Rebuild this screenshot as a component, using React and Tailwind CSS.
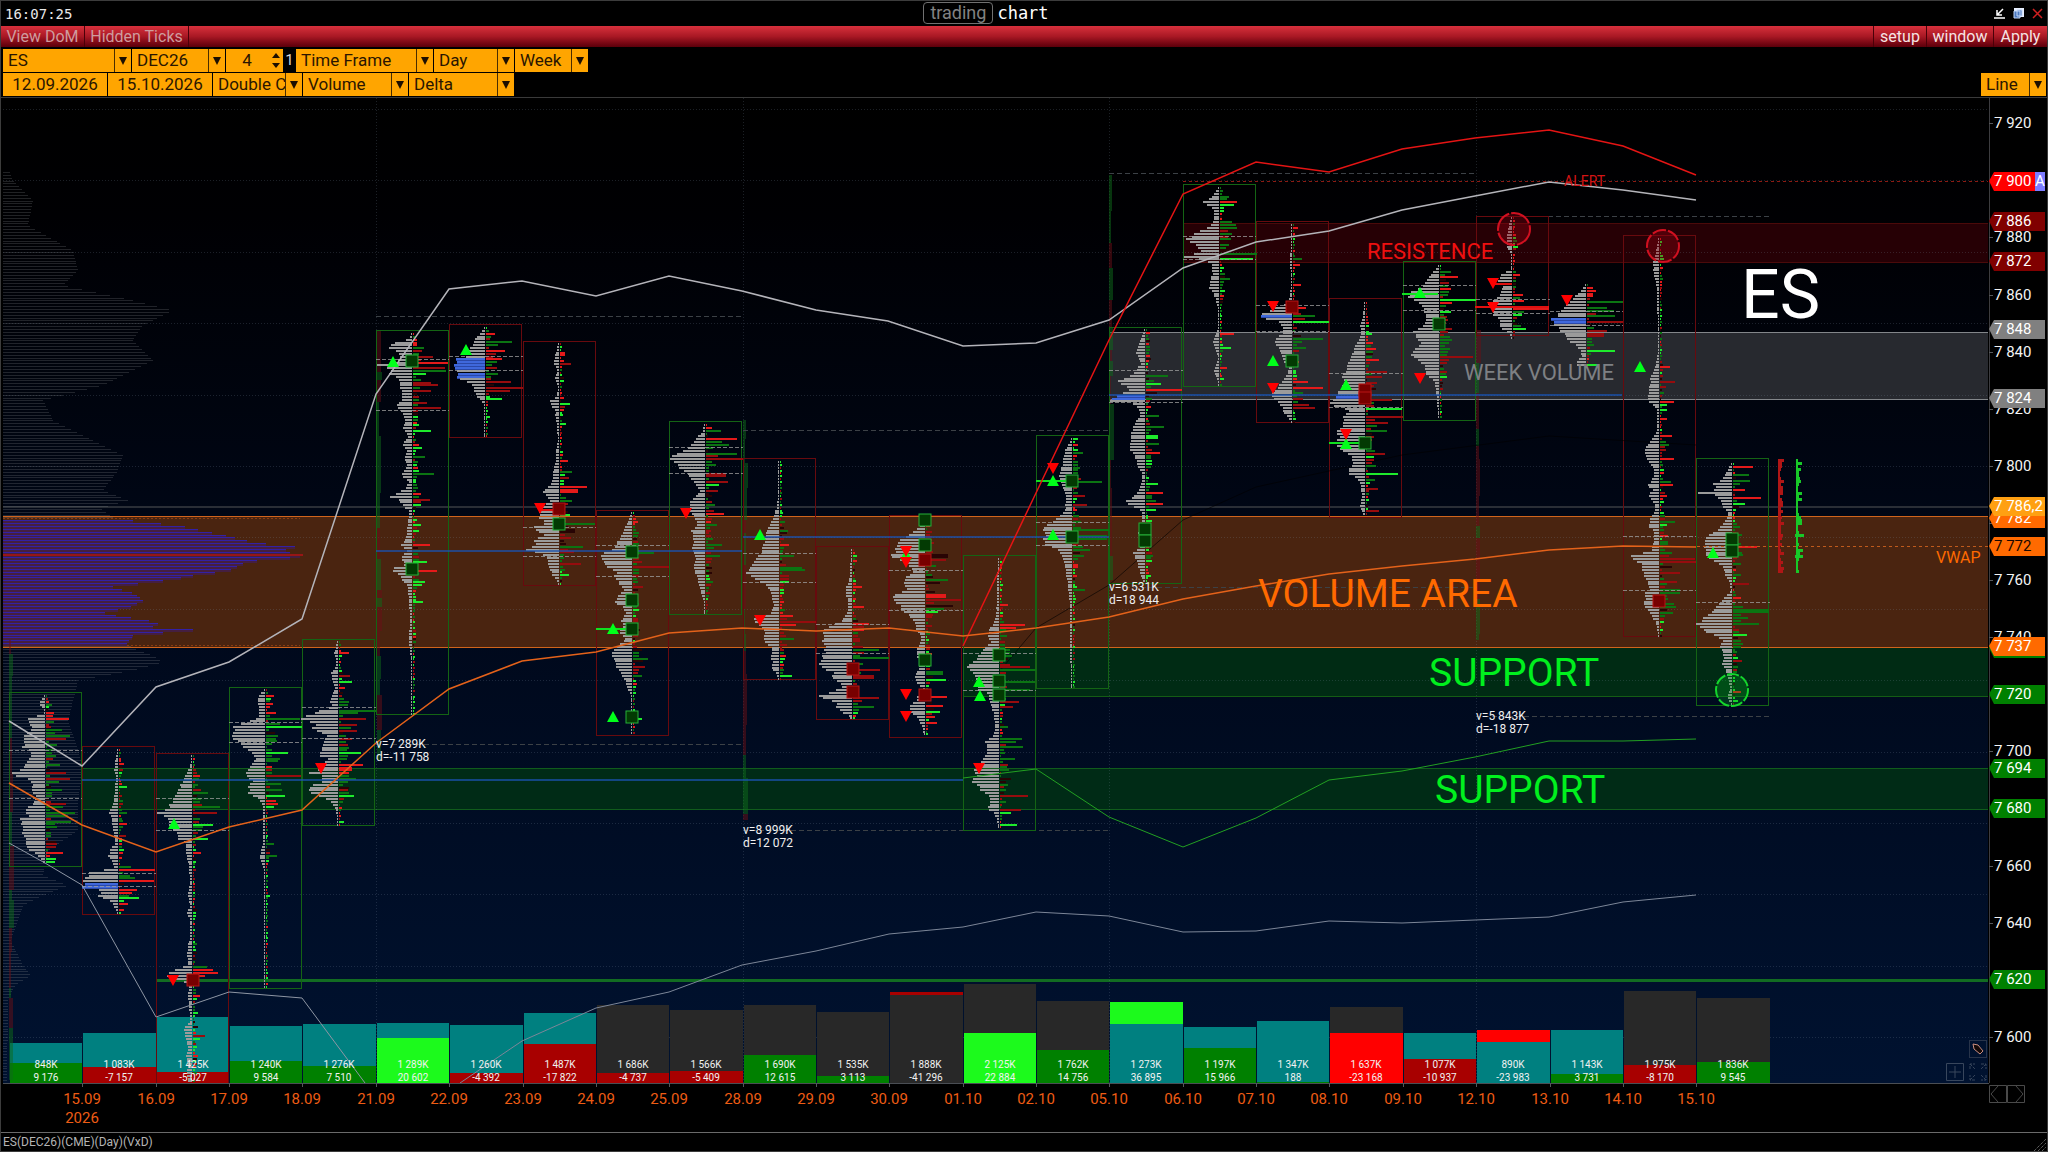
const STEP = 73.36;
const LEFT = 9;
const BASE = 1083;
const ROW = 2.855;

const sx = (k) => Math.round(LEFT + k * STEP);
const py = (price) => Math.round(123.2 + (7920 - price) * ROW);

// box: [top, bottom, colour], va: value area lines, vol: y:width, delta: y:width+tone
const sessions = [
  {
    date: "14.09", k: "848K", d: "9 176", bar: [1043, "t"], db: [1063, 1083, "g"], box: [692, 866, "g"], va: [750, 798],
    vol: "695:1 703:7 707:1 713:1 717:17 724:15 728:12 733:21 738:23 747:22 751:13 755:14 763:20 769:26 772:36 776:26 778:17 784:13 790:14 795:9 802:12 810:21 815:17 818:24 825:24 833:23 840:19 847:20 853:8 863:1",
    delta: "703:6g 713:8R 716:7R 719:23R 729:16g 735:24g 738:20r 743:11g 756:10g 764:14g 771:20r 778:24r 781:13g 789:16g 804:20r 807:17g 811:29g 815:22g 820:25g 844:11r 852:17R 858:10G 861:9G",
  },
  {
    date: "15.09", k: "1 083K", d: "-7 157", bar: [1033, "t"], db: [1067, 1083, "r"], box: [746, 914, "r"], va: [873, 886], hot: [[882, 887]],
    vol: "749:1 770:4 775:2 800:4 812:9 816:7 822:6 835:4 843:3 849:8 855:10 859:6 866:4 869:14 872:29 876:33 886:36 888:22 892:18 895:20 898:12 902:5 913:1",
    delta: "764:5R 786:8G 812:8g 823:8R 836:7r 867:12g 869:36R 877:16g 880:35R 888:18R 893:13R 898:20G 904:9R 908:5R",
  },
  {
    date: "16.09", k: "1 425K", d: "-5 027", bar: [1017, "t"], db: [1072, 1083, "r"], box: [753, 1100, "r"], va: [798, 830],
    vol: "755:1 765:2 775:7 785:12 795:17 802:20 808:26 812:34 818:26 822:25 826:22 830:19 834:13 838:15 842:6 855:6 865:3 880:2 895:4 905:2 912:5 918:2 935:2 950:5 963:4 966:9 970:22 973:26 976:24 980:10 984:3 995:4 1003:3 1020:2 1028:8 1038:7 1045:4 1057:6 1063:4 1070:5 1082:4",
    delta: "774:7R 792:15g 807:27g 811:24r 824:20G 838:15G 852:8R 967:14g 969:20R 973:25R 976:12R 995:7R 1012:5G 1035:12r 1038:7G",
  },
  {
    date: "17.09", k: "1 240K", d: "9 584", bar: [1026, "t"], db: [1061, 1083, "g"], box: [687, 988, "g"], va: [722, 742],
    vol: "689:1 694:6 705:7 714:5 718:9 721:19 727:35 731:30 735:34 740:30 745:22 750:17 757:9 764:13 770:19 776:20 780:12 785:16 793:17 797:8 803:3 810:2 840:2 857:5 865:3 870:1 988:1",
    delta: "696:8R 704:7R 711:10R 718:34g 722:14g 727:36G 735:12g 738:10g 752:22G 758:14g 760:12g 767:6R 775:35r 782:15g 790:16g 795:19G 800:10R 803:12R 807:8G 844:8g 855:11g 895:4G",
  },
  {
    date: "18.09", k: "1 276K", d: "7 510", bar: [1024, "t"], db: [1066, 1083, "g"], box: [639, 825, "g"], va: [707, 738],
    vol: "641:1 653:4 658:2 665:2 672:7 680:6 687:3 700:8 706:6 710:20 713:28 718:36 723:24 728:27 734:12 742:14 750:18 754:20 758:10 764:18 768:19 772:29 776:14 781:18 786:31 791:31 795:20 800:8 807:3 815:1 824:1",
    delta: "652:10R 675:11r 681:13G 687:6R 700:10g 704:9g 710:37g 713:19g 718:27r 724:18r 729:18r 739:13r 752:22G 758:8g 764:24R 768:13R 772:10R 778:17g 795:15G 821:5G",
  },
  {
    date: "21.09", k: "1 289K", d: "20 602", bar: [1023, "t"], db: [1038, 1083, "G"], box: [330, 714, "g"], va: [359, 410],
    vol: "333:1 338:2 343:20 347:23 352:14 357:12 362:20 364:36 368:20 372:24 378:14 385:12 393:10 400:11 405:15 412:10 420:7 427:9 435:4 443:9 450:5 458:7 464:5 470:8 474:12 480:3 487:7 492:14 495:24 500:12 505:9 510:3 530:5 540:7 544:12 550:5 558:12 563:6 569:23 574:14 580:9 586:4 600:3 620:2 640:3 660:1 713:1",
    delta: "343:4R 355:20r 361:35R 367:32r 370:33g 373:13G 381:18r 385:25r 389:18r 402:14r 407:28r 424:6G 430:18G 444:6R 447:9G 456:12g 466:5R 472:21g 492:8R 494:8R 498:17r 505:8G 523:8G 530:6G 544:17R 549:7g 561:14G 570:24R 581:12G 584:9G 601:10G",
  },
  {
    date: "22.09", k: "1 260K", d: "-4 392", bar: [1025, "t"], db: [1073, 1083, "r"], box: [324, 437, "r"], va: [356, 370], hot: [[357, 368], [372, 377]],
    vol: "327:1 333:5 338:11 343:11 347:16 350:18 356:20 358:31 365:30 372:28 375:34 378:24 382:16 388:11 395:9 400:3 405:1 436:1",
    delta: "333:9R 342:26g 344:12g 350:19R 358:16R 381:25r 387:37r 390:24r 396:4G 398:16G 416:4G",
  },
  {
    date: "23.09", k: "1 487K", d: "-17 822", bar: [1013, "t"], db: [1044, 1083, "r"], box: [341, 585, "r"], va: [527, 556],
    vol: "343:1 353:3 358:5 362:5 370:2 378:4 385:1 395:2 400:9 405:8 410:3 415:4 425:2 440:1 450:3 460:3 470:6 478:6 484:9 490:16 495:13 500:10 505:16 510:20 517:22 522:12 526:25 530:24 533:14 540:26 543:22 546:30 550:33 552:20 555:14 562:12 567:10 575:6 580:2 584:1",
    delta: "353:5R 364:11r 379:4G 398:4R 404:10G 409:4R 424:6G 459:8R 472:12g 478:9r 487:27R 490:18R 500:12g 513:10G 524:35g 530:15k 547:23g 552:14r 563:21r 575:9G",
  },
  {
    date: "24.09", k: "1 686K", d: "-4 737", bar: [1005, "n"], db: [1073, 1083, "r"], box: [510, 735, "r"], va: [545, 576],
    vol: "512:1 520:4 530:8 540:14 547:18 550:22 554:34 560:28 564:30 568:22 572:16 575:20 580:15 586:11 590:8 594:14 598:15 602:19 606:10 612:6 620:12 625:9 630:14 634:11 637:6 642:10 648:18 654:20 660:18 666:16 672:11 680:7 685:6 690:3 696:1 733:1",
    delta: "521:5R 553:21g 567:36r 586:10r 652:6g 658:15g 667:12r 676:9g 687:3G 692:3G 717:9G",
  },
  {
    date: "25.09", k: "1 566K", d: "-5 409", bar: [1010, "n"], db: [1071, 1083, "r"], box: [421, 614, "g"], va: [447, 473],
    vol: "424:1 432:3 438:10 444:14 448:20 452:27 455:35 459:34 462:30 467:27 473:18 478:14 484:9 490:5 495:9 500:14 505:17 510:16 515:12 520:9 525:8 530:14 537:12 542:12 548:13 553:11 560:10 568:11 575:9 585:6 593:4 600:1 613:1",
    delta: "427:6R 430:15g 438:31R 442:16g 444:23g 453:31g 458:37r 474:20r 481:22r 484:13G 490:12r 512:18R 524:11g 544:16g 556:14g 580:7g",
  },
  {
    date: "28.09", k: "1 690K", d: "12 615", bar: [1005, "n"], db: [1055, 1083, "g"], box: [458, 679, "r"], va: [553, 582],
    vol: "461:1 495:1 505:2 515:5 520:7 525:10 533:13 540:15 547:17 552:18 558:23 562:26 566:31 570:34 573:33 576:27 580:21 584:14 590:8 598:7 605:5 612:9 617:22 619:30 622:22 626:20 630:14 635:15 640:16 645:9 650:6 656:9 662:6 667:8 672:3 678:1",
    delta: "522:5g 530:8g 544:9R 554:14g 567:22g 570:25g 581:9G 589:4G 615:13R 620:36r 623:16R 638:14g 676:12G",
  },
  {
    date: "29.09", k: "1 535K", d: "3 113", bar: [1012, "n"], db: [1076, 1083, "g"], box: [546, 719, "r"], va: [624, 653],
    vol: "549:1 575:2 583:4 588:7 593:6 600:4 610:4 617:8 620:10 623:18 626:25 630:30 636:29 645:29 652:28 658:32 662:31 665:33 668:28 672:20 678:19 683:12 687:10 691:22 695:34 698:25 702:16 707:15 712:9 716:2 718:1",
    delta: "555:4G 561:4R 587:9R 606:11R 624:16R 628:11R 649:26g 658:36g 670:27r 676:21r 698:26r 706:21g 712:5G",
  },
  {
    date: "30.09", k: "1 888K", d: "-41 296", bar: [995, "n"], db: [992, 995, "r"], box: [515, 737, "r"], va: [570, 610],
    vol: "525:5 530:10 534:16 538:24 543:31 548:30 555:34 558:28 563:20 567:14 572:12 577:20 583:24 588:20 593:28 595:35 600:31 605:24 609:26 613:18 620:11 628:9 635:4 642:5 650:9 655:8 662:4 668:7 675:11 682:9 688:2 695:7 700:9 705:16 711:14 716:8 720:6 724:3 736:1",
    delta: "521:16R 555:22k 560:20r 578:22g 582:14k 595:20R 600:35r 605:27k 607:18g 610:12G 672:17g 680:20G 695:21R 706:17R 711:14G 716:9R 723:11R",
  },
  {
    date: "01.10", k: "2 125K", d: "22 884", bar: [984, "n"], db: [1033, 1083, "G"], box: [555, 830, "g"], va: [653, 690],
    vol: "558:1 580:2 600:2 615:3 622:5 628:10 635:11 641:9 648:15 654:20 660:26 665:35 668:32 673:27 678:23 684:20 688:26 692:12 700:10 707:7 715:5 722:4 730:4 735:7 741:14 748:11 755:14 760:18 765:22 770:26 775:22 780:28 785:22 790:17 795:10 802:9 807:12 812:6 817:2 827:1",
    delta: "584:3G 604:8R 623:25R 627:16R 666:30r 669:36g 680:35g 689:30g 701:19r 706:13r 727:8g 738:22g 741:16g 746:23g 757:15g 795:28r 808:21r 812:11G 823:17G",
  },
  {
    date: "02.10", k: "1 762K", d: "14 756", bar: [1001, "n"], db: [1050, 1083, "g"], box: [435, 688, "g"], va: [522, 545],
    vol: "438:1 444:4 450:7 458:9 463:10 470:12 476:14 482:11 488:9 495:6 503:7 508:6 515:12 520:18 525:26 530:29 536:28 542:29 545:24 548:16 553:11 560:8 567:7 575:6 585:4 595:3 610:2 640:2 687:1",
    delta: "439:5G 443:5R 452:10g 481:29g 495:12r 504:14r 529:36g 535:34g 538:34g 550:17g 555:11g 589:12g",
  },
  {
    date: "05.10", k: "1 273K", d: "36 895", bar: [1024, "t"], db: [1002, 1024, "G"], box: [327, 583, "g"], va: [370, 402], hot: [[394, 399]],
    vol: "329:1 340:5 350:9 356:7 362:4 370:9 375:16 381:29 385:18 389:18 393:26 396:30 400:35 403:12 408:6 415:5 422:10 428:12 435:15 442:14 450:16 455:10 465:8 472:3 480:3 488:6 495:11 501:22 505:12 510:4 520:3 532:7 545:4 552:12 560:8 568:6 575:4 582:1",
    delta: "333:4R 376:22g 384:15G 390:36R 415:13g 426:18g 436:12G 444:13g 453:14R 484:12G 492:17R 502:17R 510:10G 520:6G 575:5G",
  },
  {
    date: "06.10", k: "1 197K", d: "15 966", bar: [1027, "t"], db: [1048, 1083, "g"], box: [184, 386, "g"], va: [236, 259],
    vol: "187:1 193:5 198:10 202:20 205:8 212:5 220:5 225:10 230:19 234:27 238:33 241:28 245:24 250:18 254:26 256:35 259:14 264:8 272:6 280:9 287:10 293:5 300:3 306:1 325:1 332:3 340:6 348:4 355:1 365:3 370:5 377:2 385:1",
    delta: "196:9g 201:17R 204:14G 222:12g 225:16g 228:17g 253:37g 258:33G 278:10g 333:14R 347:11G 367:7R 378:4G",
  },
  {
    date: "07.10", k: "1 347K", d: "188", bar: [1021, "t"], db: [1082, 1083, "g"], box: [221, 422, "r"], va: [305, 331], hot: [[314, 316]],
    vol: "224:1 240:1 260:2 280:1 295:2 303:5 308:20 312:28 315:33 318:25 321:14 327:9 332:9 337:16 342:17 350:12 360:9 367:3 374:5 380:10 386:14 393:20 398:19 403:12 410:9 415:5 421:1",
    delta: "228:5R 258:9g 264:7R 284:8R 307:13R 316:22g 321:36G 339:30g 348:13g 380:15R 382:18R 387:30R 403:16r 407:22r 417:3G",
  },
  {
    date: "08.10", k: "1 637K", d: "-23 168", bar: [1007, "n"], db: [1033, 1083, "R"], box: [298, 517, "r"], va: [373, 407], hot: [[394, 396]],
    vol: "302:1 315:2 325:5 332:4 340:7 345:11 352:12 360:17 368:18 376:23 382:20 388:24 393:28 398:30 403:35 406:34 409:14 415:22 423:22 430:28 437:26 443:32 448:26 452:18 457:12 463:13 469:16 472:18 477:8 483:5 495:3 505:5 514:2",
    delta: "333:6G 341:7R 349:10R 358:13R 370:21r 377:16r 399:26r 407:36G 415:37r 423:22r 430:21g 453:19r 456:8G 464:10g 473:32G 478:9g 483:4G 487:12r 510:13r",
  },
  {
    date: "09.10", k: "1 077K", d: "-10 937", bar: [1033, "t"], db: [1059, 1083, "r"], box: [261, 420, "g"], va: [285, 310],
    vol: "265:1 272:7 280:14 286:17 293:33 298:28 303:18 310:14 318:14 325:17 332:28 336:22 342:18 350:26 354:30 360:20 366:14 374:13 380:5 388:3 400:2 419:1",
    delta: "270:11g 276:18R 287:11R 299:36G 303:12R 310:11G 327:12r 341:9g 356:33r 376:7G",
  },
  {
    date: "12.10", k: "890K", d: "-23 983", bar: [1042, "t"], db: [1030, 1042, "R"], box: [216, 335, "r"], va: [299, 313],
    vol: "217:1 225:3 235:5 247:5 252:1 268:1 273:10 280:15 284:9 292:11 298:17 303:26 308:20 313:20 318:13 326:13 332:3 337:1",
    delta: "246:5G 274:7R 294:10R 299:11R 307:36R 313:9G 327:13G",
  },
  {
    date: "13.10", k: "1 143K", d: "3 731", bar: [1030, "t"], db: [1074, 1083, "g"], box: null, va: [311, 325], hot: [[317, 321]],
    vol: "284:1 290:5 296:12 302:18 308:22 313:28 318:34 323:32 328:26 333:23 340:18 345:9 350:6 355:4 360:9 363:12 366:4",
    delta: "287:6R 290:9R 294:6R 302:36g 307:20g 311:27g 316:28g 322:36r 330:20r 334:17r 350:28G 365:10G",
  },
  {
    date: "14.10", k: "1 975K", d: "-8 170", bar: [991, "n"], db: [1065, 1083, "r"], box: [235, 636, "r"], va: [536, 590],
    vol: "238:1 255:4 262:6 270:6 278:4 288:2 350:1 363:3 370:6 380:9 392:10 400:12 404:6 408:2 430:2 437:6 445:12 452:15 460:11 468:5 475:5 485:12 489:6 495:11 502:5 508:3 514:7 520:9 526:10 530:5 540:5 550:8 556:35 559:25 563:18 570:17 576:14 583:11 588:8 592:14 598:13 604:16 608:12 614:8 622:3 635:1",
    delta: "366:10R 381:15r 402:14R 404:7G 410:7G 418:7R 435:12R 443:9g 457:14R 459:12g 481:11g 484:13R 494:7R 520:15g 524:7G 534:8R 542:8g 552:12g 558:35r 561:36r 567:12k 573:20r 581:17r 588:20g 591:20g 603:14g 607:16g 613:13g 620:4G 630:3G",
  },
  {
    date: "15.10", k: "1 836K", d: "9 545", bar: [998, "n"], db: [1062, 1083, "g"], box: [458, 705, "g"], va: [602],
    vol: "463:1 470:5 478:10 483:18 488:14 492:34 494:18 499:11 505:9 512:4 518:5 525:12 530:16 535:24 540:27 545:30 550:28 555:25 560:18 566:9 575:6 583:2 590:1 596:7 603:13 608:17 614:26 619:31 623:35 627:34 631:27 634:18 640:10 645:13 650:10 656:8 664:10 670:6 680:3 690:2 695:5 704:1",
    delta: "466:20R 475:16g 481:17g 490:12R 496:28R 504:12G 547:24R 575:8g 582:16r 596:8R 610:36g 617:15g 622:26g 633:14G 639:8g 643:10g 661:9r 692:8R 701:5G",
  },
];

const tones = { r: "#960c0e", R: "#e41a1a", g: "#0b7412", G: "#1eea2c", k: "#280404" };
const barFill = { t: "#008080", n: "#282828", g: "#008000", G: "#1cfa1c", r: "#a80000", R: "#ff0000" };
const boxStroke = { g: "#146414", r: "#680a0e" };

const histogram =
  "165:4 180:10 200:30 225:25 250:70 270:75 285:60 300:130 310:170 325:140 340:130 360:150 385:100 400:40 420:50 440:90 455:120 470:115 490:100 500:125 508:98 517:110 520:130 525:177 535:223 542:253 546:292 550:280 556:300 559:260 562:242 570:226 575:190 580:160 586:110 593:132 600:140 606:128 613:98 618:135 622:157 626:150 629:190 632:160 635:130 643:124 648:130 655:150 662:160 670:130 680:75 700:70 720:65 750:75 770:80 800:75 830:75 850:45 875:40 885:65 895:40 905:20 940:8 965:20 975:28 985:12 1000:5 1080:4";

const upperBand = "9,721 82,766 156,687 229,662 302,619 376,394 449,289 522,281 596,296 669,276 742,291 816,310 888,321 963,346 1036,343 1109,320 1183,268 1256,242 1329,231 1402,210 1475,196 1549,182 1623,190 1696,200";
const vwap = "9,783 82,825 156,852 229,827 302,810 376,743 449,689 522,661 596,652 669,633 742,628 816,631 889,628 963,636 1036,628 1109,617 1183,599 1256,586 1329,574 1402,566 1475,559 1549,550 1623,546 1696,547";
const redBand = "963,646 1036,493 1109,340 1183,194 1256,162 1329,172 1402,149 1475,138 1549,130 1623,146 1696,175";
const greenBand = "963,778 1036,769 1109,817 1183,847 1256,818 1329,780 1402,771 1475,757 1549,741 1623,741 1696,739";
const lowerBandA = "9,843 45,863 82,885 156,1017 229,992 302,998 365,1083";
const lowerBandB = "460,1083 522,1041 596,1008 669,992 742,965 816,951 889,934 963,927 1036,912 1109,916 1183,932 1256,931 1329,921 1402,923 1475,920 1549,917 1623,902 1696,895";
const darkLine = "982,692 1036,628 1109,585 1183,520 1256,487 1402,455 1549,436 1696,445";

const weeks = [
  { from: 5, to: 10, top: 316, bottom: 744, v: "v=7 289K", d: "d=-11 758" },
  { from: 10, to: 15, top: 430, bottom: 830, v: "v=8 999K", d: "d=12 072" },
  { from: 15, to: 20, top: 173, bottom: 587, v: "v=6 531K", d: "d=18 944" },
  { from: 20, to: 24, top: 216, bottom: 716, v: "v=5 843K", d: "d=-18 877" },
];

const pocLines = [
  [82, 963, 780],
  [376, 742, 551],
  [743, 1109, 537],
  [1109, 1622, 395],
];

const upMarks = [[174, 824], [393, 362], [466, 350], [613, 629], [613, 717], [760, 535], [906, 555], [979, 682], [980, 696], [1053, 481], [1053, 535], [1273, 361], [1346, 385], [1346, 444], [1420, 293], [1640, 367], [1713, 553]];
const downMarks = [[173, 980], [321, 768], [540, 508], [686, 513], [760, 620], [906, 551], [906, 562], [906, 694], [906, 716], [979, 768], [1053, 468], [1273, 306], [1273, 388], [1346, 434], [1420, 378], [1493, 283], [1493, 307], [1567, 300]];
const squares = [
  [193, 980, "r"], [412, 361, "g"], [412, 569, "g"], [559, 509, "r"], [559, 524, "g"],
  [632, 552, "g"], [632, 600, "g"], [632, 629, "g"], [632, 717, "g"],
  [853, 669, "r"], [853, 692, "r"],
  [925, 520, "g"], [925, 560, "r"], [925, 545, "g"], [925, 660, "g"], [925, 695, "r"],
  [999, 655, "g"], [999, 681, "g"], [999, 695, "g"],
  [1072, 481, "g"], [1072, 537, "g"], [1145, 529, "g"], [1145, 541, "g"],
  [1292, 307, "r"], [1292, 361, "g"], [1365, 390, "r"], [1365, 398, "r"], [1365, 443, "g"],
  [1439, 324, "g"], [1659, 601, "r"], [1732, 539, "g"], [1732, 551, "g"],
];

const ticks = [7920, 7880, 7860, 7840, 7820, 7800, 7780, 7760, 7740, 7700, 7660, 7640, 7600];
const tags = [
  { y: 181, text: "7 900", fill: "#ff0000", alert: true },
  { y: 221, text: "7 886", fill: "#800000" },
  { y: 261, text: "7 872", fill: "#800000" },
  { y: 329, text: "7 848", fill: "#808080" },
  { y: 398, text: "7 824", fill: "#808080" },
  { y: 518, text: "7 782", fill: "#ff6a00" },
  { y: 506, text: "7 786,2", fill: "#ffa012" },
  { y: 546, text: "7 772", fill: "#ff6a00", color: "#1a0800" },
  { y: 648, text: "", fill: "#008000" },
  { y: 646, text: "7 737", fill: "#ff6a00" },
  { y: 694, text: "7 720", fill: "#008000" },
  { y: 768, text: "7 694", fill: "#008000" },
  { y: 808, text: "7 680", fill: "#008000" },
  { y: 979, text: "7 620", fill: "#008000" },
];

function parse(str) {
  return str.split(" ").map((s) => {
    const [y, w] = s.split(":");
    return [Number(y), parseInt(w, 10), w.slice(-1)];
  });
}

function widthAt(points, y) {
  for (let i = 1; i < points.length; i++) {
    const [y0, w0] = points[i - 1];
    const [y1, w1] = points[i];
    if (y <= y1) return w0 + ((w1 - w0) * (y - y0)) / (y1 - y0);
  }
  return points[points.length - 1][1];
}

function random(seed) {
  let s = seed * 7919 + 17;
  return () => {
    s = (s * 1103515245 + 12345) % 2147483648;
    return s / 2147483648;
  };
}

function Profile({ session, index }) {
  const rnd = random(index + 3);
  const points = parse(session.vol);
  const deltas = parse(session.delta);
  const cx = sx(index) + 36;
  const first = points[0][0];
  const last = points[points.length - 1][0];
  const rows = [];
  for (let i = 0; first + i * ROW <= last; i++) {
    const y = Math.round(first + i * ROW);
    const w = Math.max(1, Math.round(widthAt(points, y) * (0.9 + rnd() * 0.14)));
    const hit = deltas.find((d) => Math.abs(d[0] - y) <= 1.4);
    const blue = (session.hot || []).some(([a, b]) => y >= a && y <= b);
    const up = rnd() < (session.box && session.box[2] === "g" ? 0.62 : 0.42);
    const bright = w < 9 && rnd() < 0.5;
    let dw = hit ? hit[1] : Math.round(1 + rnd() * Math.min(11, 1 + w * 0.5));
    let tone = up ? (bright ? "G" : "g") : bright ? "R" : rnd() < 0.3 ? "k" : "r";
    if (hit) tone = hit[2];
    if (w <= 2 && !hit) dw = i % 2 ? 2 : 1;
    rows.push({ y, w, dw, fill: tones[tone], blue });
  }
  return (
    <g shapeRendering="crispEdges">
      {rows.map((r) => (
        <g key={r.y}>
          {r.blue && <rect x={cx - r.w} y={r.y} width={r.w} height={3} fill="#2a48a8" />}
          <rect x={cx - r.w} y={r.y} width={r.w} height={2} fill={r.blue ? "#3f68dc" : "#9b9b9b"} />
          <rect x={cx + 1} y={r.y} width={r.dw} height={2} fill={r.fill} />
        </g>
      ))}
      {session.va.map((y) => (
        <path key={y} d={`M${sx(index)} ${y}.5H${sx(index + 1)}`} stroke="#a0a0a0" strokeDasharray="4 2" strokeOpacity="0.75" />
      ))}
    </g>
  );
}

function Histogram() {
  const points = parse(histogram);
  const rows = [];
  for (let i = 0; 172 + i * ROW < 1080; i++) {
    const y = Math.round(172 + i * ROW);
    const w = Math.round(widthAt(points, y));
    rows.push({ y, w, inside: y > 517 && y < 645 });
  }
  return (
    <g shapeRendering="crispEdges">
      {rows.map(({ y, w, inside }) =>
        inside ? (
          <g key={y}>
            <rect x={3} y={y} width={w} height={3} fill="#451f40" />
            <rect x={3} y={y} width={w} height={1} fill="#3320a4" />
          </g>
        ) : (
          <rect key={y} x={3} y={y} width={w} height={1} fill="#8a8f94" fillOpacity="0.24" />
        )
      )}
      <rect x={3} y={554} width={300} height={2} fill="#981616" />
    </g>
  );
}

function WeekStrip({ x, from, to, seed }) {
  const rnd = random(seed);
  const parts = [];
  for (let y = from; y < to; ) {
    const h = 8 + Math.round(rnd() * 30);
    parts.push({ y, h, w: 2 + Math.round(rnd() * 3), fill: rnd() < 0.55 ? "#0f6a1a" : "#6a1016" });
    y += h;
  }
  return (
    <g shapeRendering="crispEdges" opacity="0.5">
      {parts.map((p) => (
        <rect key={p.y} x={x} y={p.y} width={p.w} height={Math.min(p.h, to - p.y)} fill={p.fill} />
      ))}
    </g>
  );
}

function LiveStrip({ x, color, seed, max }) {
  const rnd = random(seed);
  const rows = Array.from({ length: 38 }, (_, i) => ({ y: 459 + i * 3, w: 1 + Math.round(rnd() * rnd() * max) }));
  return (
    <g shapeRendering="crispEdges" fill={color}>
      {rows.map((r) => (
        <rect key={r.y} x={x - (r.w > 6 ? 1 : 0)} y={r.y} width={r.w + 1} height={3} />
      ))}
    </g>
  );
}

function VolumeBars() {
  return (
    <g>
      {sessions.map((s, i) => {
        const x = sx(i);
        const w = sx(i + 1) - x - 1;
        return (
          <g key={s.date} shapeRendering="crispEdges">
            <rect x={x + 1} y={s.bar[0]} width={w} height={BASE - s.bar[0]} fill={barFill[s.bar[1]]} />
            <rect x={x + 1} y={s.db[0]} width={w} height={s.db[1] - s.db[0]} fill={barFill[s.db[2]]} />
          </g>
        );
      })}
    </g>
  );
}

function VolumeLabels() {
  return (
    <g fontSize="10" fill="#f2f2f2" textAnchor="middle">
      {sessions.map((s, i) => (
        <g key={s.date}>
          <text x={sx(i) + 37} y={1068}>{s.k}</text>
          <text x={sx(i) + 37} y={1081}>{s.d}</text>
        </g>
      ))}
    </g>
  );
}

function Marks() {
  return (
    <g>
      {squares.map(([x, y, c], i) => (
        <rect
          key={i}
          x={x - 6}
          y={y - 6}
          width={12}
          height={12}
          fill={c === "g" ? "#033a03" : "#780000"}
          stroke={c === "g" ? "#26b038" : "#b81414"}
        />
      ))}
      {upMarks.map(([x, y], i) => (
        <path key={i} d={`M${x} ${y - 6}L${x + 6} ${y + 5}H${x - 6}Z`} fill="#00ff1a" />
      ))}
      {downMarks.map(([x, y], i) => (
        <path key={i} d={`M${x} ${y + 6}L${x + 6} ${y - 5}H${x - 6}Z`} fill="#ff0000" />
      ))}
      <circle cx={1514} cy={229} r={16} fill="#a00010" fillOpacity="0.35" stroke="#d01020" strokeWidth="2" strokeDasharray="22 2" />
      <circle cx={1663} cy={246} r={16} fill="#a00010" fillOpacity="0.35" stroke="#d01020" strokeWidth="2" strokeDasharray="14 2" />
      <circle cx={1732} cy={690} r={16} fill="#00a020" fillOpacity="0.3" stroke="#14d62c" strokeWidth="2" strokeDasharray="12 2" />
    </g>
  );
}

function Bands() {
  return (
    <g shapeRendering="crispEdges">
      <rect x={1183} y={223} width={805} height={40} fill="#260005" />
      <path d="M1183 223.5H1988M1183 262.5H1988" stroke="#4a0a0a" />
      <rect x={1109} y={332} width={879} height={67} fill="#27292f" />
      <path d="M1109 332.5H1988M1109 399.5H1988" stroke="#83868a" />
      <path d="M3 506.5H1988" stroke="#2a2e36" strokeWidth="2" />
      <rect x={3} y={516} width={1985} height={131} fill="#4a2410" />
      <path d="M3 516.5H1988M3 647.5H1988" stroke="#d0641c" />
      <path d="M3 518.5H300M3 645.5H300" stroke="#8a3c10" strokeDasharray="2 2" />
      <rect x={963} y={648} width={1025} height={48} fill="#002b14" />
      <path d="M963 696.5H1988" stroke="#145c14" />
      <rect x={82} y={768} width={1906} height={42} fill="#002b16" />
      <path d="M82 768.5H1988M82 809.5H1988" stroke="#115c1c" />
      <path d="M156 980H1988" stroke="#126c22" strokeWidth="3" />
    </g>
  );
}

function Grid() {
  const rows = Array.from({ length: 14 }, (_, i) => Math.round(109 + i * 71.4));
  return (
    <g shapeRendering="crispEdges" stroke="#8090a8" strokeOpacity="0.22" strokeDasharray="1 2">
      {rows.map((y) => (
        <path key={y} d={`M3 ${y}.5H1988`} />
      ))}
      {weeks.map((w) => (
        <path key={w.from} d={`M${sx(w.from)}.5 98V1083`} />
      ))}
    </g>
  );
}

function PriceAxis() {
  return (
    <g fontSize="15">
      <path d="M1989.5 98V1083" stroke="#3c3c40" />
      {ticks.map((p) => (
        <g key={p}>
          <path d={`M1989 ${py(p)}.5h4`} stroke="#55585c" />
          <text x={1994} y={py(p) + 5} fill="#f4f4f4">{`7 ${p - 7000}`}</text>
        </g>
      ))}
      {tags.map((t, i) => (
        <g key={i}>
          <path d={`M1989 ${t.y}L1994 ${t.y - 9}H2045V${t.y + 10}H1994Z`} fill={t.fill} />
          {t.alert && <rect x={2035} y={t.y - 9} width={10} height={19} fill="#7c7cff" />}
          {t.alert && <text x={2035} y={t.y + 5} fill="#ffffff">A</text>}
          <text x={1994} y={t.y + 5} fill={t.color || "#ffffff"}>{t.text}</text>
        </g>
      ))}
    </g>
  );
}

function DateAxis() {
  return (
    <g fontSize="15" fill="#ee5c14" textAnchor="middle">
      <path d="M3 1083.5H1989" stroke="#4a4e54" />
      {sessions.slice(1).map((s, i) => (
        <g key={s.date}>
          <path d={`M${sx(i + 1)}.5 1083v4`} stroke="#55585c" />
          <text x={sx(i + 1)} y={1104}>{s.date}</text>
        </g>
      ))}
      <text x={82} y={1123}>2026</text>
    </g>
  );
}

function Chart() {
  return (
    <svg viewBox="1 98 2046 1034" className="block h-auto w-full" fontFamily="Roboto, sans-serif" role="img" aria-label="ES volume profile chart">
      <defs>
        <linearGradient id="sky" x1="0" y1="0" x2="0" y2="1">
          <stop offset="0" stopColor="#000000" />
          <stop offset="0.12" stopColor="#000003" />
          <stop offset="0.5" stopColor="#00081a" />
          <stop offset="1" stopColor="#001230" />
        </linearGradient>
        <clipPath id="plot">
          <rect x="3" y="98" width="1986" height="985" />
        </clipPath>
      </defs>
      <g clipPath="url(#plot)">
        <rect x="3" y="98" width="1985" height="985" fill="url(#sky)" />
        <Bands />
        <Grid />
        <Histogram />
        <VolumeBars />
        <WeekStrip x={9} from={640} to={1080} seed={5} />
        <WeekStrip x={377} from={330} to={760} seed={6} />
        <WeekStrip x={743} from={420} to={820} seed={9} />
        <WeekStrip x={1109} from={175} to={580} seed={11} />
        <WeekStrip x={1476} from={330} to={640} seed={14} />
        {weeks.map((w) => (
          <path key={w.from} d={`M${sx(w.from)} ${w.top}.5H${sx(w.to)}M${sx(w.from)} ${w.bottom}.5H${sx(w.to)}`} stroke="#3c4146" strokeDasharray="5 3" />
        ))}
        {sessions.map((s, i) =>
          s.box ? (
            <rect key={s.date} x={sx(i) + 0.5} y={s.box[0] + 0.5} width={72} height={s.box[1] - s.box[0]} fill="none" stroke={boxStroke[s.box[2]]} />
          ) : null
        )}
        <polyline points={darkLine} fill="none" stroke="#000000" strokeOpacity="0.6" />
        {sessions.map((s, i) => (
          <Profile key={s.date} session={s} index={i} />
        ))}
        {pocLines.map(([a, b, y]) => (
          <path key={y} d={`M${a} ${y}H${b}`} stroke="#1a52b0" strokeOpacity="0.7" strokeWidth="2" />
        ))}
        <path d="M1402 294H1438M1329 443H1365M1036 481H1072M596 629H632" stroke="#10e020" strokeWidth="2" />
        <path d="M1475 307H1548M540 510H559M1493 284H1512" stroke="#e01010" strokeWidth="2" />
        <LiveStrip x={1778} color="#b01616" seed={21} max={7} />
        <LiveStrip x={1796} color="#18c828" seed={33} max={9} />
        <path d="M1183 181.5H1988" stroke="#8c1a12" strokeDasharray="3 3" />
        <path d="M1697 546.5H1988" stroke="#c05a1c" strokeDasharray="3 3" />
        <g fill="none">
          <polyline points={upperBand} stroke="#b4b4ba" strokeWidth="1.5" />
          <polyline points={lowerBandA} stroke="#8e96a4" />
          <polyline points={lowerBandB} stroke="#7c8698" />
          <polyline points={redBand} stroke="#e41414" strokeWidth="1.5" />
          <polyline points={greenBand} stroke="#22a022" />
          <polyline points={vwap} stroke="#e4621a" strokeWidth="1.5" />
        </g>
        <Marks />
        <VolumeLabels />
        <g fontSize="12" fill="#f0f0f0">
          {weeks.map((w) => (
            <g key={w.from}>
              <text x={sx(w.from)} y={w.bottom + 4}>{w.v}</text>
              <text x={sx(w.from)} y={w.bottom + 17}>{w.d}</text>
            </g>
          ))}
        </g>
        <text x="1564" y="186" fontSize="14" fill="#d41414">ALERT</text>
        <text x="1367" y="259" fontSize="22" fill="#ee1010">RESISTENCE</text>
        <text x="1464" y="380" fontSize="22" fill="#7e8084">WEEK VOLUME</text>
        <text x="1258" y="607" fontSize="39" fill="#ff6a00">VOLUME AREA</text>
        <text x="1429" y="686" fontSize="39" fill="#00f01e">SUPPORT</text>
        <text x="1435" y="803" fontSize="39" fill="#00f01e">SUPPORT</text>
        <text x="1741" y="318" fontSize="68" fill="#ffffff">ES</text>
        <text x="1936" y="563" fontSize="16" fill="#ff6a00">VWAP</text>
      </g>
      <PriceAxis />
      <DateAxis />
    </svg>
  );
}

function ChartTools() {
  return (
    <>
      <div className="absolute right-[60px] bottom-[51px] grid grid-cols-2 gap-x-[5px] gap-y-[5px] text-[#38465c]">
        <button type="button" aria-label="Draw" className="col-start-2 h-[18px] w-[18px] border border-[#28344a]">
          <svg viewBox="0 0 16 16" className="h-4 w-4" fill="#150a08" stroke="#c98d80">
            <path d="M3 3l5 1 5 6-3 3-6-5z" />
          </svg>
        </button>
        <button type="button" aria-label="Grid" className="col-start-1 h-[18px] w-[18px]">
          <svg viewBox="0 0 18 18" className="h-[18px] w-[18px]" fill="none" stroke="currentColor">
            <path d="M.5.5h17v17H.5zM9 3v12M3 9h12" />
          </svg>
        </button>
        <button type="button" aria-label="Full screen" className="h-[18px] w-[18px]">
          <svg viewBox="0 0 18 18" className="h-[18px] w-[18px]" fill="none" stroke="currentColor">
            <path d="M1 6V1h5M12 1h5v5M17 12v5h-5M6 17H1v-5M1 1l5 5M17 1l-5 5M17 17l-5-5M1 17l5-5" strokeDasharray="3 1" />
          </svg>
        </button>
      </div>
      <div className="absolute right-[22px] bottom-[29px] flex text-[#4a4a4a]">
        <button type="button" aria-label="Scroll left" className="h-[18px] w-[18px]">
          <svg viewBox="0 0 18 18" className="h-[18px] w-[18px]" fill="none" stroke="currentColor">
            <path d="M.5.5h17v17H.5zM9 1L2 9l7 8" />
          </svg>
        </button>
        <button type="button" aria-label="Scroll right" className="h-[18px] w-[18px]">
          <svg viewBox="0 0 18 18" className="h-[18px] w-[18px]" fill="none" stroke="currentColor">
            <path d="M.5.5h17v17H.5zM9 1l7 8-7 8" />
          </svg>
        </button>
      </div>
    </>
  );
}

function Dropdown({ label, value, className }) {
  return (
    <div className={`relative h-[23px] bg-[#ffa500] ${className}`}>
      <select aria-label={label} defaultValue={value} className="h-full w-full appearance-none overflow-hidden bg-transparent pr-[17px] pl-[5px] outline-none">
        <option>{value}</option>
      </select>
      <span className="pointer-events-none absolute inset-y-0 right-0 flex w-[17px] items-center justify-center border-l border-[#4a2d00] bg-[#ffa500]">
        <svg viewBox="0 0 8 8" className="h-2 w-2" fill="#1c0f00">
          <path d="M0 0h8L4 8z" />
        </svg>
      </span>
    </div>
  );
}

function DateField({ label, value }) {
  return (
    <input aria-label={label} defaultValue={value} className="h-[23px] w-[104px] bg-[#ffa500] text-center outline-none" />
  );
}

function Toolbar() {
  return (
    <div className="flex items-end justify-between border-b border-[#3a3a3a] pt-[2px] pr-px pb-px pl-[2px] text-[17px] leading-[23px] text-[#2a1500]">
      <div className="flex flex-col gap-px">
        <div className="flex gap-px">
          <Dropdown label="Instrument" value="ES" className="w-[128px]" />
          <Dropdown label="Contract" value="DEC26" className="w-[93px]" />
          <div className="flex h-[23px] w-[57px] bg-[#ffa500]">
            <input aria-label="Scale" defaultValue="4" className="w-[42px] bg-transparent text-center outline-none" />
            <div className="flex flex-1 flex-col items-center justify-center gap-[5px]">
              <button type="button" aria-label="Increase">
                <svg viewBox="0 0 8 5" className="block h-[5px] w-2" fill="#1c0f00">
                  <path d="M0 5h8L4 0z" />
                </svg>
              </button>
              <button type="button" aria-label="Decrease">
                <svg viewBox="0 0 8 5" className="block h-[5px] w-2" fill="#1c0f00">
                  <path d="M0 0h8L4 5z" />
                </svg>
              </button>
            </div>
          </div>
          <span className="w-[11px] text-center text-[15px] text-[#d8d8d8]">1</span>
          <Dropdown label="Range type" value="Time Frame" className="w-[137px]" />
          <Dropdown label="Period" value="Day" className="w-[80px]" />
          <Dropdown label="Group" value="Week" className="w-[73px]" />
        </div>
        <div className="flex gap-px">
          <DateField label="From" value="12.09.2026" />
          <DateField label="To" value="15.10.2026" />
          <Dropdown label="Chart type" value="Double Cluster" className="w-[89px]" />
          <Dropdown label="Left data" value="Volume" className="w-[105px]" />
          <Dropdown label="Right data" value="Delta" className="w-[105px]" />
        </div>
      </div>
      <Dropdown label="Drawing" value="Line" className="w-[65px]" />
    </div>
  );
}

function TitleBar() {
  return (
    <header className="relative flex h-[25px] items-center justify-between px-[4px]">
      <time className="font-['DejaVu_Sans_Mono',monospace] text-[14px] leading-none text-[#e8e8e8]">16:07:25</time>
      <h1 className="absolute top-px right-[76px] left-0 mx-auto flex w-fit items-center gap-1">
        <span className="flex h-[22px] items-center rounded-[4px] border border-[#707070] px-[6px] text-[18px] leading-none text-[#828282]">trading</span>
        <span className="font-['DejaVu_Sans_Mono',monospace] text-[17px] leading-none text-white">chart</span>
      </h1>
      <div className="flex items-center gap-[8px]">
        <button type="button" aria-label="Minimize">
          <svg viewBox="0 0 11 11" className="block h-[11px] w-[11px]" fill="none" stroke="#fff" strokeWidth="1.5">
            <path d="M9 1L3 7M3 2v5h5M0 10h11" />
          </svg>
        </button>
        <button type="button" aria-label="Restore">
          <svg viewBox="0 0 11 11" className="block h-[11px] w-[11px]">
            <path d="M1 0h10v9H1z" fill="#e8f0ff" />
            <path d="M1 3h6v7H1zM4 2h5v6H4z" fill="#4a78c0" stroke="#c4d8f8" />
          </svg>
        </button>
        <button type="button" aria-label="Close">
          <svg viewBox="0 0 11 11" className="block h-[11px] w-[11px]" fill="none" stroke="#d02020" strokeWidth="1.5">
            <path d="M1 1l9 9M10 1l-9 9" />
          </svg>
        </button>
      </div>
    </header>
  );
}

function MenuBar() {
  return (
    <nav className="flex h-[21px] items-stretch justify-between bg-gradient-to-b from-[#d8303c] via-[#a81824] to-[#5c000a] text-[16px] leading-[21px]">
      <div className="flex text-[#cf9c9e]">
        <button type="button" className="w-[84px] border-r border-[#4a0008]">View DoM</button>
        <button type="button" className="w-[104px] border-r border-[#4a0008]">Hidden Ticks</button>
      </div>
      <div className="flex text-[#f6e4e4]">
        <button type="button" className="w-[53px] border-l border-[#4a0008]">setup</button>
        <button type="button" className="w-[67px] border-l border-[#4a0008]">window</button>
        <button type="button" className="w-[54px] border-l border-[#4a0008]">Apply</button>
      </div>
    </nav>
  );
}

export default function App() {
  return (
    <div className="border border-[#3c3c3c] bg-black font-[Roboto,sans-serif] text-white">
      <TitleBar />
      <MenuBar />
      <Toolbar />
      <main className="relative">
        <Chart />
        <ChartTools />
      </main>
      <footer className="flex h-[19px] items-end justify-between border-t border-[#6a6a6a] pr-px pl-[2px]">
        <span className="self-center text-[12px] leading-none text-[#b4b4b4]">ES(DEC26)(CME)(Day)(VxD)</span>
        <svg viewBox="0 0 12 12" className="h-3 w-3" stroke="#8a8a8a" strokeDasharray="1 1">
          <path d="M0 12L12 0M4 12l8-8M8 12l4-4" />
        </svg>
      </footer>
    </div>
  );
}
